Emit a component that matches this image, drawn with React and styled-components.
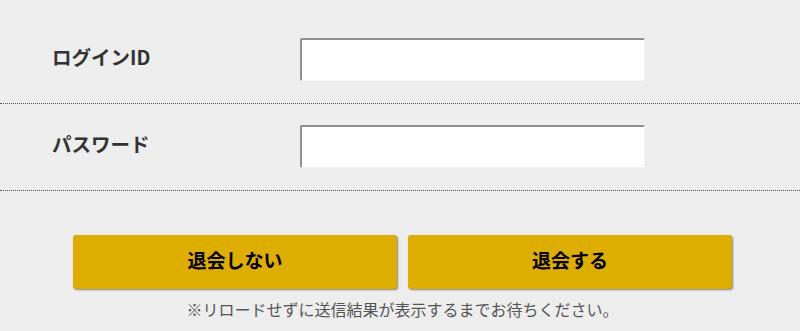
import React from 'react';
import styled, { createGlobalStyle } from 'styled-components';

const GlobalStyle = createGlobalStyle`
  body {
    margin: 0;
    background: #eeeeee;
    font-family: "Noto Sans CJK JP", "Noto Sans", sans-serif;
  }
`;

const Page = styled.div`
  padding-top: 17px;
  height: 331px;
  box-sizing: border-box;
  overflow: hidden;
`;

const Row = styled.div`
  display: flex;
  align-items: center;
  padding: 21px 0 22px;
  border-bottom: 1px dotted #555;
`;

const Label = styled.label`
  flex: 0 0 300px;
  padding: 0 0 6px 52px;
  box-sizing: border-box;
  font-size: 19.5px;
  line-height: 1.2;
  font-weight: bold;
  color: #333;
`;

const Input = styled.input`
  width: 345px;
  height: 43px;
  box-sizing: border-box;
  margin: 0;
  padding: 0 8px;
  background: #fff;
  border-top: 2px solid #8f8f8f;
  border-left: 2px solid #8f8f8f;
  border-right: 1px solid #f4f4f4;
  border-bottom: 1px solid #f4f4f4;
  border-radius: 2px;
  font-size: 16px;
  outline: none;
`;

const Buttons = styled.div`
  display: flex;
  gap: 11px;
  padding-left: 73px;
  margin-top: 44px;
`;

const Button = styled.button`
  width: 324px;
  height: 54px;
  padding: 0 0 5px;
  border: none;
  border-radius: 3px;
  background: #ddad00;
  box-shadow: 1px 1px 2px rgba(0, 0, 0, 0.45);
  font-family: inherit;
  font-size: 19px;
  font-weight: bold;
  color: #000;
  cursor: pointer;
`;

const Note = styled.p`
  width: 659px;
  margin: 9px 0 0 73px;
  text-align: center;
  font-size: 16px;
  line-height: 22px;
  color: #555;
`;

function App() {
  return (
    <>
      <GlobalStyle />
      <Page>
        <form onSubmit={(e) => e.preventDefault()}>
          <Row>
            <Label htmlFor="login-id">ログインID</Label>
            <Input id="login-id" type="text" name="login_id" />
          </Row>
          <Row>
            <Label htmlFor="password">パスワード</Label>
            <Input id="password" type="password" name="password" />
          </Row>
          <Buttons>
            <Button type="button">退会しない</Button>
            <Button type="submit">退会する</Button>
          </Buttons>
          <Note>※リロードせずに送信結果が表示するまでお待ちください。</Note>
        </form>
      </Page>
    </>
  );
}

export default App;
